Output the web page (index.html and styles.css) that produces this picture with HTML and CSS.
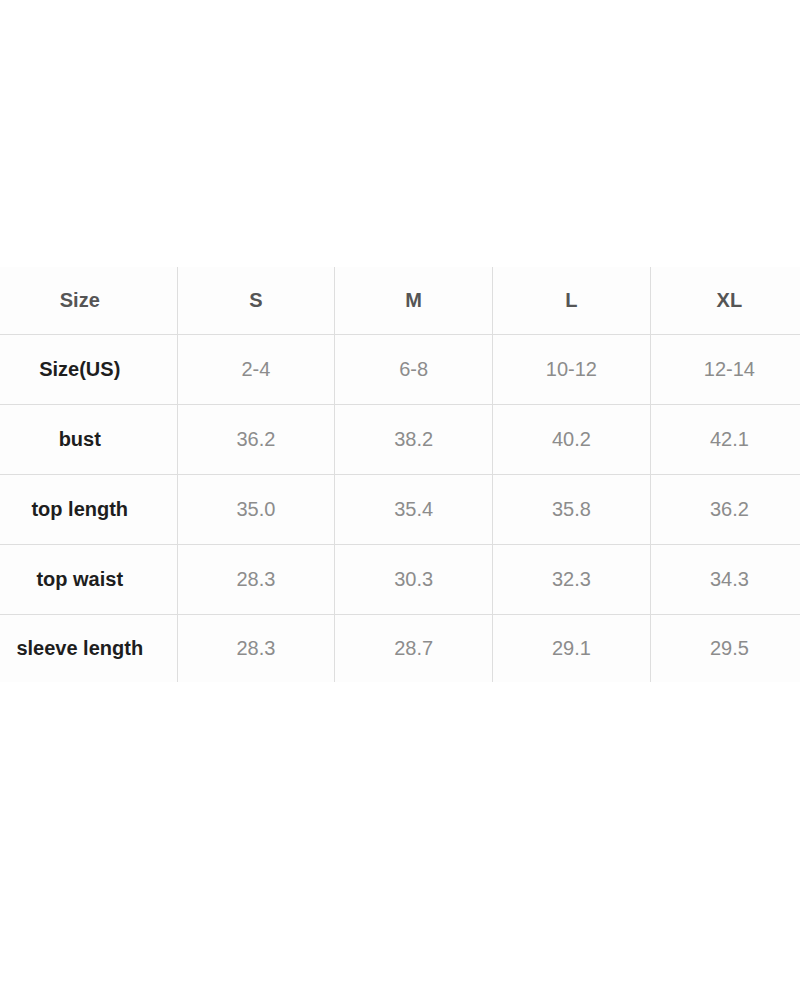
FILE: index.html
```html
<!DOCTYPE html>
<html>
<head>
<meta charset="utf-8">
<link rel="stylesheet" href="styles.css">
</head>
<body>
<div class="page">
  <div class="wrap">
    <table class="chart">
      <colgroup>
        <col class="c-label"><col class="c-val"><col class="c-val"><col class="c-val"><col class="c-val">
      </colgroup>
      <thead>
        <tr class="head">
          <th>Size</th><th>S</th><th>M</th><th>L</th><th>XL</th>
        </tr>
      </thead>
      <tbody>
        <tr><th>Size(US)</th><td>2-4</td><td>6-8</td><td>10-12</td><td>12-14</td></tr>
        <tr><th>bust</th><td>36.2</td><td>38.2</td><td>40.2</td><td>42.1</td></tr>
        <tr><th>top length</th><td>35.0</td><td>35.4</td><td>35.8</td><td>36.2</td></tr>
        <tr><th>top waist</th><td>28.3</td><td>30.3</td><td>32.3</td><td>34.3</td></tr>
        <tr class="last"><th>sleeve length</th><td>28.3</td><td>28.7</td><td>29.1</td><td>29.5</td></tr>
      </tbody>
    </table>
  </div>
</div>
</body>
</html>
```

FILE: styles.css
```css
html, body {
  margin: 0;
  padding: 0;
  background: #ffffff;
}
.page {
  width: 800px;
  height: 1000px;
  overflow: hidden;
  padding-top: 267px;
  box-sizing: border-box;
}
.wrap {
  width: 800px;
  overflow: hidden;
}
.chart {
  width: 808px;
  border-collapse: collapse;
  table-layout: fixed;
  font-family: "Liberation Sans", Arial, sans-serif;
  font-size: 20px;
  background: #fdfdfd;
}
.c-label { width: 177px; }
.c-val { width: 157.75px; }
.chart th, .chart td {
  height: 69px;
  padding: 0;
  text-align: center;
  vertical-align: middle;
  border-left: 1px solid #dedede;
  border-top: 1px solid #dedede;
}
.chart tr > :first-child {
  border-left: none;
  padding-right: 17px;
}
.chart .head th {
  height: 67px;
  border-top: none;
  color: #555555;
  font-weight: bold;
}
.chart tbody th {
  color: #1e1e1e;
  font-weight: bold;
}
.chart tbody td {
  color: #8c8c8c;
  font-weight: normal;
}
.chart .last th, .chart .last td {
  height: 67px;
}
```
